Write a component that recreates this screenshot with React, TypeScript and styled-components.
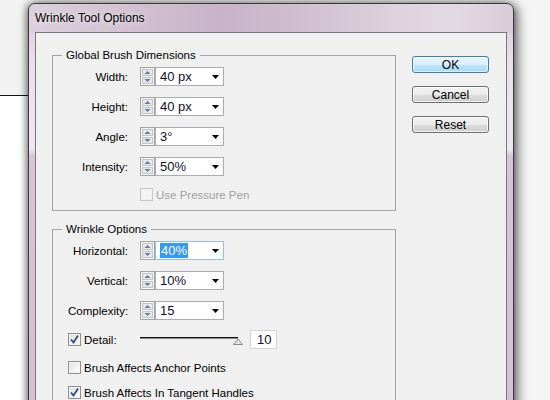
import React from 'react'
import styled, { createGlobalStyle } from 'styled-components'

const GlobalStyle = createGlobalStyle`
  html, body { margin: 0; padding: 0; }
  body {
    background: #f4f4f4;
    font-family: "Liberation Sans", Arial, sans-serif;
    -webkit-font-smoothing: none;
  }
`

const Desktop = styled.div`
  display: flex;
  width: 550px;
  height: 400px;
  overflow: hidden;
  background: #f5f5f5;
`

const DeskEdge = styled.div`
  flex: 0 0 28px;
  display: flex;
  flex-direction: column;
`

const DeskTop = styled.div`
  height: 95px;
  background: #f2f2f2;
  border-bottom: 1px solid #111;
`

const DeskBottom = styled.div`
  flex: 1;
  background: #fff;
`

const Window = styled.div`
  flex: 0 0 486px;
  box-sizing: border-box;
  margin-top: 3px;
  height: 440px;
  border: 1px solid #3b3640;
  border-radius: 7px 7px 0 0;
  padding: 0 6px;
  display: flex;
  flex-direction: column;
  background:
    linear-gradient(90deg, #dcd0dc 0%, #d2c2d2 20%, #c8b3c8 40%, #cfbecf 55%, #ddd1dd 75%, #e3d9e3 88%, #d9cbd9 100%) top / 100% 29px no-repeat,
    linear-gradient(180deg, #d6c8d6 0px, #e9e1e9 60px, #eee8ee 145px, #d7c5d7 152px, #d3c0d3 100%);
  box-shadow: 3px 2px 12px rgba(0, 0, 0, 0.65), -2px 0 6px rgba(0, 0, 0, 0.35);
`

const TitleBar = styled.div`
  height: 28px;
  display: flex;
  align-items: center;
  font-size: 12px;
  color: #000;
  text-shadow: 0 0 6px rgba(255, 255, 255, 0.9);
`

const Content = styled.div`
  flex: 1;
  display: flex;
  align-items: flex-start;
  gap: 16px;
  border: 1px solid #7c7280;
  background: #f0f0f0;
  padding: 15px 0 0 16px;
`

const Groups = styled.div`
  width: 344px;
  display: flex;
  flex-direction: column;
  gap: 11px;
`

const GroupBox = styled.fieldset`
  margin: 0;
  min-width: 0;
  border: 1px solid #a3a3a3;
  padding: 5px 0 6px 15px;
`

const Legend = styled.legend`
  margin-left: -6px;
  padding: 0 4px;
  font-size: 11.5px;
  line-height: 14px;
  color: #000;
`

const Row = styled.div<{ $top?: number }>`
  display: flex;
  align-items: center;
  height: 19px;
  margin-top: ${p => p.$top ?? 11}px;
  &:first-of-type { margin-top: 0; }
  font-size: 11.5px;
  color: #000;
`

const Label = styled.div`
  width: 60px;
  margin-right: 12px;
  text-align: right;
  white-space: nowrap;
`

const Field = styled.div`
  display: flex;
`

const Combo = styled.div<{ $focused?: boolean }>`
  width: 69px;
  height: 19px;
  box-sizing: border-box;
  display: flex;
  align-items: center;
  justify-content: space-between;
  padding: 0 4px 0 4px;
  background: #fff;
  border: 1px solid ${p => (p.$focused ? '#8fc1ec' : '#abadb3')};
  font-size: 13px;
  color: #101030;
`

const Selected = styled.span`
  background: #3399ff;
  color: #fff;
  padding: 0 1px;
  line-height: 15px;
`

const CheckText = styled.span<{ $disabled?: boolean }>`
  margin-left: 3px;
  color: ${p => (p.$disabled ? '#a0a0a0' : '#000')};
  white-space: nowrap;
`

const Box = styled.span<{ $disabled?: boolean }>`
  width: 13px;
  height: 13px;
  box-sizing: border-box;
  flex: 0 0 13px;
  display: flex;
  align-items: center;
  justify-content: center;
  border: 1px solid ${p => (p.$disabled ? '#c6c6c6' : '#8e8f8f')};
  background: ${p => (p.$disabled ? '#f4f4f4' : 'linear-gradient(135deg, #dcdcdc 0%, #f4f4f4 60%, #ffffff 100%)')};
  box-shadow: inset 0 0 0 1px ${p => (p.$disabled ? '#f0f0f0' : '#f4f4f4')};
`

const CheckLabel = styled.div<{ $width?: number }>`
  display: flex;
  align-items: center;
  width: ${p => (p.$width ? `${p.$width}px` : 'auto')};
  margin-right: ${p => (p.$width ? 12 : 0)}px;
`

const Indent = styled.div`
  width: 72px;
`

const Slider = styled.div`
  position: relative;
  width: 98px;
  height: 19px;
  display: flex;
  align-items: center;
`

const Track = styled.div`
  width: 100%;
  height: 0;
  margin-top: -3px;
  border-top: 1px solid #111;
  border-bottom: 1px solid #8a8a8a;
`

const Thumb = styled.svg`
  position: absolute;
  right: -5px;
  top: 8px;
`

const NumBox = styled.div`
  width: 27px;
  height: 19px;
  box-sizing: border-box;
  margin-left: 12px;
  padding-left: 6px;
  display: flex;
  align-items: center;
  background: #fff;
  border: 1px solid #d2d5da;
  font-size: 13px;
  color: #101030;
`

const Buttons = styled.div`
  margin-top: 8px;
  display: flex;
  flex-direction: column;
  gap: 13px;
`

const Button = styled.div<{ $primary?: boolean }>`
  width: 77px;
  height: 17px;
  box-sizing: border-box;
  border-radius: 3px;
  display: flex;
  align-items: center;
  justify-content: center;
  font-size: 12px;
  color: #000;
  border: 1px solid ${p => (p.$primary ? '#3c7fb1' : '#707070')};
  background: ${p =>
    p.$primary
      ? 'linear-gradient(180deg, #eaf6fd 0%, #d9f0fc 50%, #bee6fd 51%, #a7d9f5 100%)'
      : 'linear-gradient(180deg, #f2f2f2 0%, #ebebeb 50%, #dddddd 51%, #cfcfcf 100%)'};
  box-shadow: inset 0 0 0 1px ${p => (p.$primary ? 'rgba(255,255,255,0.6)' : 'rgba(255,255,255,0.7)')};
`

const Spinner = () => (
  <svg width="15" height="19" viewBox="0 0 15 19">
    <rect x="0.5" y="0.5" width="14" height="18" fill="#f6f6f6" stroke="#a3a3a3" />
    <rect x="2.5" y="2.5" width="10" height="6" fill="#e8e8e8" stroke="#c4c4c4" />
    <rect x="2.5" y="10.5" width="10" height="6" fill="#e8e8e8" stroke="#c4c4c4" />
    <path d="M4.5 7 L7.5 4 L10.5 7 Z" fill="#6277b0" />
    <path d="M4.5 12 L7.5 15 L10.5 12 Z" fill="#6277b0" />
  </svg>
)

const Arrow = () => (
  <svg width="7" height="4" viewBox="0 0 7 4">
    <path d="M0 0 H7 L3.5 4 Z" fill="#000" />
  </svg>
)

const Check = ({ checked, disabled }: { checked?: boolean; disabled?: boolean }) => (
  <Box $disabled={disabled}>
    {checked && (
      <svg width="11" height="11" viewBox="0 0 11 11">
        <path d="M2 5.5 L4.5 8.5 L9 1.5" fill="none" stroke="#33488a" strokeWidth="1.8" />
      </svg>
    )}
  </Box>
)

const SpinCombo = ({ value, focused }: { value: string; focused?: boolean }) => (
  <Field>
    <Spinner />
    <Combo $focused={focused}>
      {focused ? <Selected>{value}</Selected> : <span>{value}</span>}
      <Arrow />
    </Combo>
  </Field>
)

const dimensions = [
  { label: 'Width:', value: '40 px' },
  { label: 'Height:', value: '40 px' },
  { label: 'Angle:', value: '3°' },
  { label: 'Intensity:', value: '50%' },
]

const wrinkles = [
  { label: 'Horizontal:', value: '40%', focused: true },
  { label: 'Vertical:', value: '10%' },
  { label: 'Complexity:', value: '15' },
]

export default function App() {
  return (
    <>
      <GlobalStyle />
      <Desktop>
        <DeskEdge>
          <DeskTop />
          <DeskBottom />
        </DeskEdge>
        <Window>
          <TitleBar>Wrinkle Tool Options</TitleBar>
          <Content>
            <Groups>
              <GroupBox>
                <Legend>Global Brush Dimensions</Legend>
                {dimensions.map(d => (
                  <Row key={d.label}>
                    <Label>{d.label}</Label>
                    <SpinCombo value={d.value} />
                  </Row>
                ))}
                <Row $top={9}>
                  <Indent />
                  <Check disabled />
                  <CheckText $disabled>Use Pressure Pen</CheckText>
                </Row>
              </GroupBox>
              <GroupBox>
                <Legend>Wrinkle Options</Legend>
                {wrinkles.map(w => (
                  <Row key={w.label}>
                    <Label>{w.label}</Label>
                    <SpinCombo value={w.value} focused={w.focused} />
                  </Row>
                ))}
                <Row $top={10}>
                  <CheckLabel $width={60}>
                    <Check checked />
                    <CheckText>Detail:</CheckText>
                  </CheckLabel>
                  <Slider>
                    <Track />
                    <Thumb width="10" height="7" viewBox="0 0 10 7">
                      <path d="M0.5 6.5 L5 1 L9.5 6.5 Z" fill="#e0e0e0" stroke="#8c8c8c" />
                    </Thumb>
                  </Slider>
                  <NumBox>10</NumBox>
                </Row>
                <Row $top={9}>
                  <Check />
                  <CheckText>Brush Affects Anchor Points</CheckText>
                </Row>
                <Row $top={6}>
                  <Check checked />
                  <CheckText>Brush Affects In Tangent Handles</CheckText>
                </Row>
              </GroupBox>
            </Groups>
            <Buttons>
              <Button $primary>OK</Button>
              <Button>Cancel</Button>
              <Button>Reset</Button>
            </Buttons>
          </Content>
        </Window>
      </Desktop>
    </>
  )
}
